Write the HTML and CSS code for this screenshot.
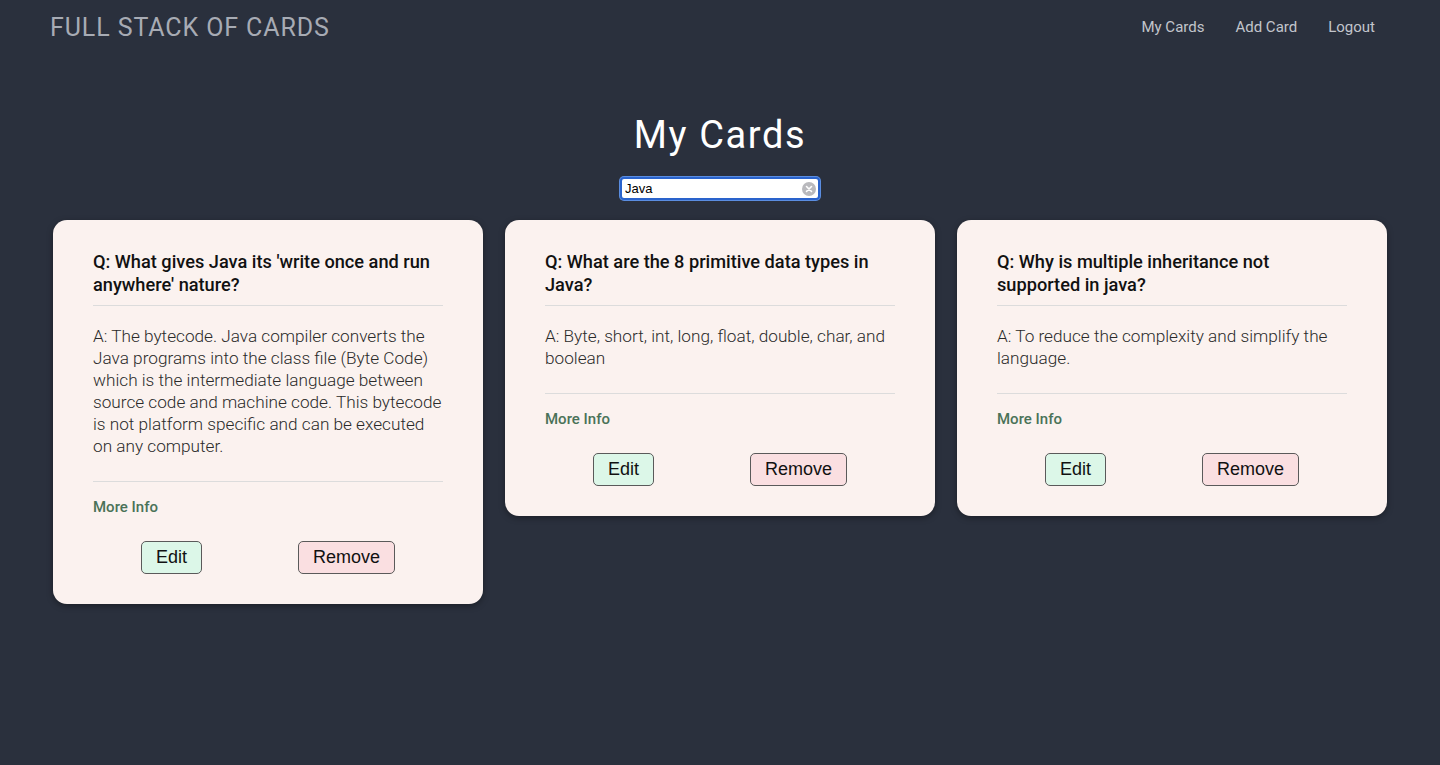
FILE: index.html
```html
<!DOCTYPE html>
<html lang="en">
<head>
<meta charset="utf-8">
<title>Full Stack of Cards</title>
<link rel="stylesheet" href="styles.css">
</head>
<body>
<header class="nav">
  <div class="brand">FULL STACK OF CARDS</div>
  <nav class="links">
    <a href="#">My Cards</a>
    <a href="#">Add Card</a>
    <a href="#">Logout</a>
  </nav>
</header>
<main class="main">
  <h1 class="title">My Cards</h1>
  <div class="search">
    <input class="search-input" type="text" value="Java">
    <span class="clear"><svg width="14" height="14" viewBox="0 0 14 14"><circle cx="7" cy="7" r="7" fill="#b9b9bd"/><path d="M4.5 4.5l5 5M9.5 4.5l-5 5" stroke="#fff" stroke-width="1.6" stroke-linecap="round"/></svg></span>
  </div>
  <section class="cards">
    <article class="card">
      <h2 class="q">Q: What gives Java its 'write once and run anywhere' nature?</h2>
      <hr class="rule">
      <p class="a">A: The bytecode. Java compiler converts the Java programs into the class file (Byte Code) which is the intermediate language between source code and machine code. This bytecode is not platform specific and can be executed on any computer.</p>
      <hr class="rule rule-b">
      <a class="more" href="#">More Info</a>
      <div class="actions">
        <button class="btn edit">Edit</button>
        <button class="btn remove">Remove</button>
      </div>
    </article>
    <article class="card">
      <h2 class="q">Q: What are the 8 primitive data types in Java?</h2>
      <hr class="rule">
      <p class="a">A: Byte, short, int, long, float, double, char, and boolean</p>
      <hr class="rule rule-b">
      <a class="more" href="#">More Info</a>
      <div class="actions">
        <button class="btn edit">Edit</button>
        <button class="btn remove">Remove</button>
      </div>
    </article>
    <article class="card">
      <h2 class="q">Q: Why is multiple inheritance not supported in java?</h2>
      <hr class="rule">
      <p class="a">A: To reduce the complexity and simplify the language.</p>
      <hr class="rule rule-b">
      <a class="more" href="#">More Info</a>
      <div class="actions">
        <button class="btn edit">Edit</button>
        <button class="btn remove">Remove</button>
      </div>
    </article>
  </section>
</main>
</body>
</html>
```
FILE: styles.css
```css
* { box-sizing: border-box; }
html, body { height: 100%; }
body {
  margin: 0;
  background: #2a303d;
  font-family: Roboto, "Liberation Sans", sans-serif;
  color: #fff;
}
.nav {
  display: flex;
  justify-content: space-between;
  align-items: center;
  padding: 2px 65px 0 50px;
  height: 52px;
}
.brand {
  font-size: 25px;
  letter-spacing: 0.9px;
  color: #a7abb4;
  font-weight: 400;
}
.links {
  display: flex;
  gap: 31px;
}
.links a {
  color: #c2c5cc;
  text-decoration: none;
  font-size: 15px;
}
.main {
  display: flex;
  flex-direction: column;
  align-items: center;
}
.title {
  margin: 58px 0 0;
  font-size: 38px;
  font-weight: 400;
  letter-spacing: 1.6px;
  line-height: 50px;
}
.search {
  margin-top: 17px;
  width: 200px;
  height: 23px;
  display: flex;
  align-items: center;
  background: #fff;
  border: 2px solid #2a63cc;
  border-radius: 4px;
  box-shadow: 0 0 0 1px #5b8de0;
  padding: 0 2px 0 3px;
}
.search-input {
  flex: 1;
  min-width: 0;
  border: 0;
  outline: none;
  font-family: "Liberation Sans", Arial, sans-serif;
  font-size: 13px;
  color: #000;
  padding: 0;
  background: transparent;
}
.clear { display: flex; }
.cards {
  display: flex;
  align-items: flex-start;
  gap: 22px;
  margin-top: 20px;
}
.card {
  width: 430px;
  background: #fbf2ef;
  border-radius: 14px;
  padding: 30px 40px 30px;
  box-shadow: 0 2px 6px rgba(0,0,0,0.35);
  display: flex;
  flex-direction: column;
  color: #111;
}
.q {
  margin: 0;
  font-size: 18.2px;
  font-weight: 500;
  line-height: 23px;
}
.rule {
  width: 100%;
  border: 0;
  border-top: 1px solid #dcdcdc;
  margin: 9px 0 19px;
}
.rule-b { margin: 0 0 16px; }
.a {
  margin: 0 0 24px;
  font-size: 17.2px;
  font-weight: 300;
  line-height: 22px;
  color: #2a2a2a;
}
.more {
  font-size: 15px;
  font-weight: 500;
  color: #4a7258;
  text-decoration: none;
  line-height: 18px;
}
.actions {
  display: flex;
  justify-content: space-around;
  margin-top: 25px;
}
.btn {
  font-family: "Liberation Sans", Arial, sans-serif;
  font-size: 18px;
  height: 33px;
  padding: 0 14px;
  border: 1px solid #5a5a5a;
  border-radius: 5px;
  color: #111;
}
.edit { background: #dcf7e8; }
.remove { background: #fadfe1; }
```
